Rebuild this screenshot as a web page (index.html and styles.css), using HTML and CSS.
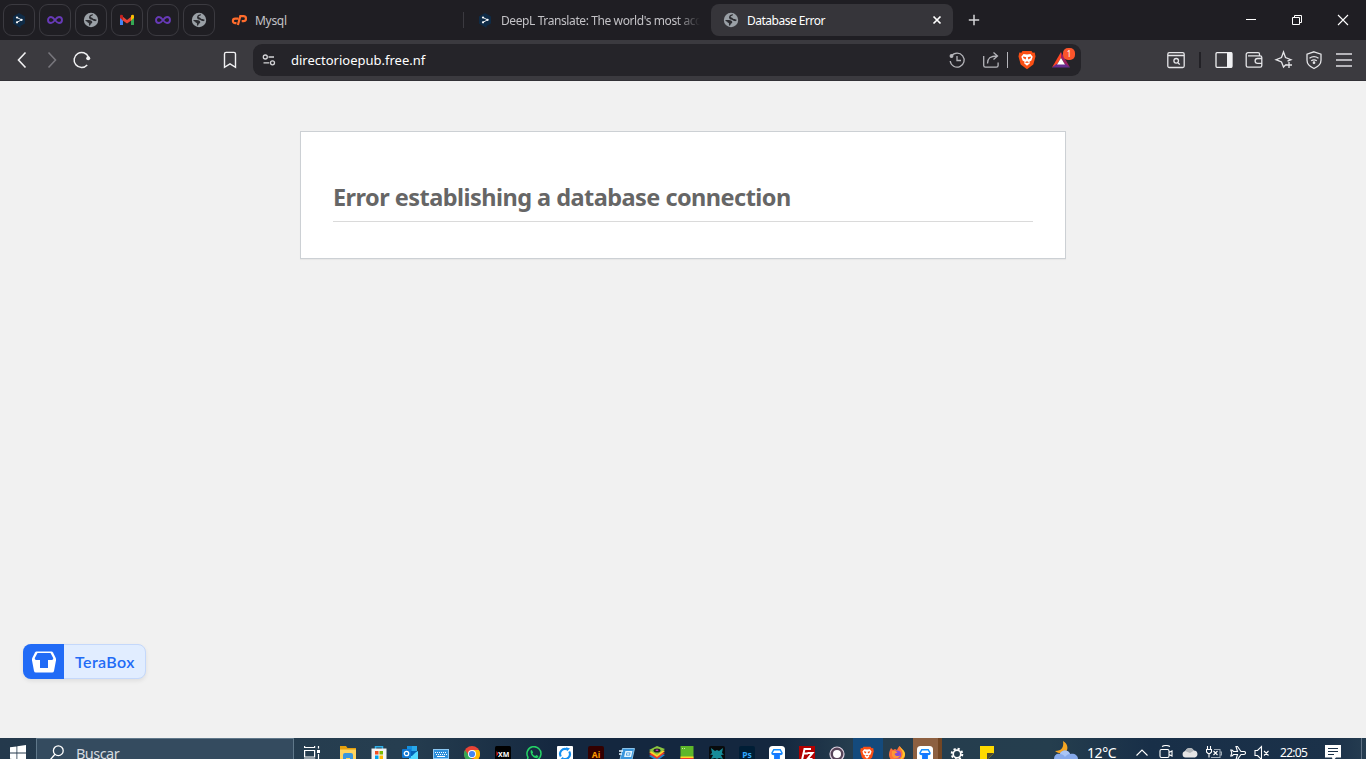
FILE: index.html
```html
<!DOCTYPE html>
<html lang="es">
<head>
  <meta charset="UTF-8">
  <meta name="viewport" content="width=device-width, initial-scale=1.0">
  <title>Database Error</title>
  <link rel="stylesheet" href="styles.css">
</head>
<body>

<!-- Iconos repetidos -->
<svg class="sprite" width="0" height="0">
  <symbol id="deepl" viewBox="0 0 16 16">
    <path fill="#0f2b46" d="M8 1l6 3.400v7L9.500 14v2L2 11.400v-7z"/>
    <path fill="none" stroke="#fff" stroke-width=".9" d="M6 5.500l4.500 2.300L6 10.300"/>
    <circle fill="#fff" cx="6" cy="5.500" r="1.100"/><circle fill="#fff" cx="10.600" cy="7.800" r="1.100"/><circle fill="#fff" cx="6" cy="10.300" r="1.100"/>
  </symbol>
  <symbol id="infinity" viewBox="0 0 16 16">
    <path fill="none" stroke="#673ab7" stroke-width="1.900" d="M8 8C6.500 6 5.500 5 4 5a3 3 0 0 0 0 6c1.500 0 2.500-1 4-3s2.500-3 4-3a3 3 0 0 1 0 6c-1.500 0-2.500-1-4-3z"/>
  </symbol>
  <symbol id="globe" viewBox="0 0 16 16">
    <circle cx="8" cy="8" r="7.200" fill="#9aa0a6"/>
    <path fill="#2b2b30" d="M10 2.300c0 1.200-.6 1.700-1.800 1.700-.8 0-.8 1.500.3 1.600 1.200.2 1 1.400 2.500 1.400.8 0 1.500.5 2.700.8 0 1-1 1.500-2.200 1.300C10 9 9.500 7.800 8 7.600 6.300 7.400 5.500 5.500 6.400 4 7 3 8.500 2.200 10 2.300z"/>
    <path fill="#2b2b30" d="M2.300 8h3.500C8 8 9.500 9 9.300 10.300c-.2 1.300-1.600 1-1.800 2.200-.1.700-.3 1.200-1 1.200-.6-.2-.6-1.400-.5-2 .1-1.200-1.700-.7-1.700-2C3.500 9.500 2.500 9.500 2.300 8z"/>
  </symbol>
  <symbol id="gmail" viewBox="0 0 16 16">
    <path fill="#4285f4" d="M1 5v8h3V7z"/><path fill="#34a853" d="M12 7v6h3V5z"/>
    <path fill="#ea4335" d="M3 4l5 4 5-4v4l-5 3.500L3 8z"/>
    <path fill="#c5221f" d="M1 6V4c0-1.500 2-1.500 3-.5v5z"/><path fill="#fbbc04" d="M15 6V4c0-1.500-2-1.500-3-.5v5z"/>
  </symbol>
  <symbol id="brave" viewBox="0 0 20 20">
    <path fill="#fb4f14" d="M5.500 1h9l1.200 1.800 2-.2.800 4-2.200 8L10 19.200l-6.300-4.600-2.200-8 .8-4 2 .2z"/>
    <path fill="#fff" d="M10 4.500l3.500-.5 2.200 2.800-1.300 3.700-2 1.300.5 1.400-2.900 2.600-2.900-2.600.5-1.400-2-1.300-1.300-3.700L6.500 4z"/>
    <path fill="#fb4f14" d="M6.200 6.500l3 .7-.5 2.300-2.500-1.600zM13.800 6.500l-3 .7.5 2.300 2.500-1.600zM7.800 12.200l2.200-1 2.200 1-2.200.7z"/>
  </symbol>
  <symbol id="tera" viewBox="0 0 16 16">
    <rect width="16" height="16" rx="3.500" fill="#fff"/>
    <path fill="none" stroke="#1590ff" stroke-width="1.500" d="M4.800 3.700h6.400L13 7q0 1.500-2 1.500h-.8v5H5.800v-5H5Q3 8.500 3 7z"/>
    <path fill="#1677ff" d="M3 7h10q0 1.500-2 1.500h-.8v5H5.800v-5H5Q3 8.500 3 7z"/>
  </symbol>
</svg>

<header class="tabs">
  <div class="pinned"><svg><use href="#deepl"/></svg></div>
  <div class="pinned"><svg><use href="#infinity"/></svg></div>
  <div class="pinned"><svg><use href="#globe"/></svg></div>
  <div class="pinned"><svg><use href="#gmail"/></svg></div>
  <div class="pinned"><svg><use href="#infinity"/></svg></div>
  <div class="pinned"><svg><use href="#globe"/></svg></div>
  <div class="tab tab-mysql">
    <svg viewBox="0 0 16 16" fill="none" stroke="#ff6c2c" stroke-width="2.200">
      <path d="M7.300 6.600H4.200a2.300 2.300 0 0 0 0 4.600h1.300M6.900 13L9.300 4.200h3.200a2.200 2.200 0 0 1 0 4.900h-1.800"/>
    </svg>
    <span class="title">Mysql</span>
  </div>
  <div class="tab tab-deepl">
    <svg><use href="#deepl"/></svg>
    <span class="title fade">DeepL Translate: The world's most acc</span>
  </div>
  <div class="tab active">
    <svg><use href="#globe"/></svg>
    <span class="title">Database Error</span>
    <svg class="close" viewBox="0 0 16 16"><path stroke="#fff" stroke-width="1.700" d="M4.500 4.500l7 7M11.500 4.500l-7 7"/></svg>
  </div>
  <svg class="new-tab" viewBox="0 0 16 16"><path stroke="#d5d5d8" stroke-width="1.500" d="M8 2.800v10.400M2.800 8h10.400"/></svg>
  <div class="window-buttons">
    <svg viewBox="0 0 16 16"><path stroke="#fff" d="M3 7.500h10"/></svg>
    <svg viewBox="0 0 16 16" fill="none" stroke="#fff"><path d="M3.500 5.500h7v7h-7zM5.500 5.500v-2h7v7h-2"/></svg>
    <svg viewBox="0 0 16 16"><path stroke="#fff" stroke-width="1.100" d="M3 3l10 10M13 3L3 13"/></svg>
  </div>
</header>

<nav class="toolbar">
  <div class="nav-buttons">
    <svg viewBox="0 0 20 20"><path stroke="#f0f0f2" stroke-width="1.600" d="M13.500 2.500L6.500 10l7 7.500"/></svg>
    <svg viewBox="0 0 20 20"><path stroke="#77767c" stroke-width="1.600" d="M6.500 2.500l7 7.500-7 7.500"/></svg>
    <svg viewBox="0 0 20 20"><path stroke="#f0f0f2" stroke-width="1.500" d="M15.200 15A7.500 7.500 0 1 1 16.500 7"/><circle cx="16.200" cy="8.300" r="2" fill="#f0f0f2"/></svg>
  </div>
  <svg class="bookmark" viewBox="0 0 20 20"><path stroke="#f0f0f2" stroke-width="1.400" d="M4.500 17.300V4c0-1 .6-1.600 1.600-1.600h7.800c1 0 1.600.6 1.600 1.600v13.300L10 13.800z"/></svg>
  <div class="address">
    <svg viewBox="0 0 20 20" stroke="#d5d5d8" stroke-width="1.300"><circle cx="6.300" cy="7" r="2"/><path d="M9.500 7H15M4.500 12.800h5.800"/><circle cx="13.500" cy="12.800" r="2"/></svg>
    <span class="url">directorioepub.free.nf</span>
    <svg class="history" viewBox="0 0 20 20" stroke="#b5b5ba" stroke-width="1.300"><path d="M4.500 6a7 7 0 1 1-1.300 5M10 6v4.500h4"/><circle cx="4.500" cy="6" r="1.300" fill="#b5b5ba"/></svg>
    <svg class="share" viewBox="0 0 20 20" stroke="#b5b5ba" stroke-width="1.300"><path d="M2.700 6v9.500c0 1.200.5 1.700 1.700 1.700h11c1.200 0 1.700-.5 1.700-1.700v-3M6.500 13.500c0-5 2.500-7.500 9.500-7.500M12.500 2.500L16.500 6l-4 3.500"/></svg>
    <span class="divider"></span>
    <svg class="shield"><use href="#brave"/></svg>
    <span class="rewards">
      <svg viewBox="0 0 20 20"><path fill="#ff4724" d="M10 2L1 17.500l4.500-2.500L10 8z"/><path fill="#9e1f63" d="M10 2l9 15.500-4.500-2.500L10 8z"/><path fill="#662d91" d="M1 17.500h18L14.500 14h-9z"/><path fill="#fff" d="M10 8l4 6.500H6z"/></svg>
      <span class="badge">1</span>
    </span>
  </div>
  <div class="actions">
    <svg viewBox="0 0 20 20" stroke="#e5e5e8" stroke-width="1.300"><rect x="1.800" y="2.700" width="16.400" height="14.800" rx="1.500"/><path d="M2 5.500h16M12 13l1.800 1.500"/><circle cx="10.200" cy="10.800" r="2.300"/></svg>
    <span class="divider dark"></span>
    <svg viewBox="0 0 20 20"><rect x="2" y="2.700" width="16" height="14.600" rx="1" stroke="#f0f0f2" stroke-width="1.300"/><path fill="#f0f0f2" d="M13 2.500h5v15h-5z"/></svg>
    <svg viewBox="0 0 20 20" stroke="#e5e5e8" stroke-width="1.300"><path d="M15.500 5.500V4c0-.8-.5-1.300-1.300-1.300H4A1.800 1.800 0 0 0 2.200 4.500v11c0 1 .6 1.600 1.600 1.600h12.400c1 0 1.600-.6 1.600-1.600v-8c0-1-.6-1.600-1.600-1.600H4M18 8.500h-4.500a2.400 2.400 0 0 0 0 4.800H18"/></svg>
    <svg viewBox="0 0 20 20" stroke="#e5e5e8" stroke-width="1.300"><path d="M12 14.500L9.500 17l-2-5L2 9.700l5.500-2.200L9.500 2l2 5.500L17 9.700l-3.500 1.500M15 12v6M12 15h6"/></svg>
    <svg viewBox="0 0 20 20" stroke="#e5e5e8" stroke-width="1.300"><path d="M10 1.800l7 2.400v6c0 3.800-3 6.500-7 8.300-4-1.800-7-4.500-7-8.300v-6zM5.500 8.200c3-2 6-2 9 0M7.200 10.700c2-1.300 3.600-1.300 5.600 0"/><circle cx="10" cy="12.700" r=".7"/></svg>
    <svg viewBox="0 0 20 20" stroke="#b5b4b9" stroke-width="1.800"><path d="M2 4h16M2 10h16M2 16h16"/></svg>
  </div>
</nav>

<main class="page">
  <div class="error-box">
    <h1>Error establishing a database connection</h1>
  </div>
  <div class="terabox">
    <div class="terabox-logo">
      <svg viewBox="0 0 24 22"><path fill="#fff" d="M4.500 .5h15q1 0 1.500 1L24 7.500v2L22 20q-.3 1.500-2 1.500H4Q2.300 21.500 2 20L0 9.500v-2l3-6q.5-1 1.500-1z"/><path fill="#216bf6" d="M5.500 2h13l2.700 5c.3 1.500-.8 2-1.900 2H16v8H8V9H4.700C3.600 9 2.500 8.500 2.800 7z"/></svg>
    </div>
    <span class="terabox-name">TeraBox</span>
  </div>
</main>

<footer class="taskbar">
  <div class="start"><svg viewBox="0 0 16 16" fill="#fff"><path d="M0 2.300L6.500 1.400v6.100H0zM7.300 1.300L16 0v7.500H7.300zM0 8.400h6.500v6.200L0 13.700zM7.300 8.400H16V16l-8.700-1.200z"/></svg></div>
  <div class="search">
    <svg viewBox="0 0 16 16" fill="none" stroke="#fff" stroke-width="1.300"><circle cx="9.300" cy="5.700" r="4.900"/><path d="M6 9.300L1 15"/></svg>
    <span>Buscar</span>
  </div>
  <div class="apps">
    <!-- Vista de tareas -->
    <div class="app task-view"><svg viewBox="0 0 16 16" fill="none" stroke="#fff" stroke-width="1.200"><path d="M.6 0v1.500h10V0M.6 4.500h10v6.500h-10zM.6 16v-3h10v3M14.500 0v2.500M14.500 8v8"/><path fill="#fff" d="M13.600 4.500h1.800v1.800h-1.800z"/></svg></div>
    <!-- Explorador -->
    <div class="app"><svg viewBox="0 0 16 16"><path fill="#e5a00d" d="M0 0h6l1.500 2H16v5H0z"/><path fill="#ffd45e" d="M0 3.500h16V16H0z"/><path fill="#3a96dd" d="M3 16V9q0-2 2-2h6q2 0 2 2v7h-3v-4H6v4z"/></svg></div>
    <!-- Microsoft Store -->
    <div class="app"><svg viewBox="0 0 16 16"><path fill="none" stroke="#30b0e8" stroke-width="1.500" d="M4.500 3V.7h7V3"/><path fill="#f4f4f4" d="M.5 2.500h15V16H.5z"/><path fill="#f25022" d="M4 5h3.500v3.500H4z"/><path fill="#7fba00" d="M8.500 5H12v3.500H8.500z"/><path fill="#00a4ef" d="M4 9.500h3.500V13H4z"/><path fill="#ffb900" d="M8.500 9.500H12V13H8.500z"/></svg></div>
    <!-- Outlook -->
    <div class="app"><svg viewBox="0 0 16 16"><path fill="#1490df" d="M5 0h8v6H5z"/><path fill="#28a8ea" d="M10 0h5v5h-5z"/><path fill="#50d9ff" d="M7 9l9-4v9H7z"/><path fill="#0364b8" d="M5 5h10l-5 5H5z"/><rect y="3" width="9" height="9" rx="1" fill="#0f78d4"/><circle cx="4.500" cy="7.500" r="2.200" fill="none" stroke="#fff" stroke-width="1.300"/></svg></div>
    <!-- Teclado -->
    <div class="app"><svg viewBox="0 0 16 16"><rect x=".5" y="3.500" width="15" height="9" fill="#2d8fdc" stroke="#8dc9f5"/><path stroke="#fff" stroke-dasharray="1 1" d="M2 6.500h12M3 8.500h11"/><path stroke="#fff" d="M4 10.500h8"/></svg></div>
    <!-- Chrome -->
    <div class="app"><svg viewBox="0 0 16 16"><circle cx="8" cy="8" r="8" fill="#ea4335"/><path fill="#34a853" d="M1.100 4L5 10l3 2-1 4A8 8 0 0 1 1.100 4z"/><path fill="#fbbc04" d="M8 4h6.900A8 8 0 0 1 7 16l4.500-6z"/><circle cx="8" cy="8" r="4" fill="#fff"/><circle cx="8" cy="8" r="3.100" fill="#4285f4"/></svg></div>
    <!-- XM -->
    <div class="app"><svg viewBox="0 0 16 16"><rect width="16" height="16" rx="1.500"/><path fill="#e2231a" d="M1.500 5l2 2.700-2 2.700z"/><text class="xm" x="3" y="10.500">XM</text></svg></div>
    <!-- WhatsApp -->
    <div class="app"><svg viewBox="0 0 16 16"><path fill="none" stroke="#25d366" stroke-width="1.500" d="M1 15l1-3.700A7 7 0 1 1 5 14z"/><path fill="#25d366" d="M4.700 4.500l1.200-.4 1.200 2.300-.8 1q1 2 3 2.700l1-1 2 1c0 1.700-1.300 2.300-2.600 2C6.800 11.500 4 8 4.700 4.500z"/></svg></div>
    <!-- Sincronización -->
    <div class="app"><svg viewBox="0 0 16 16"><rect width="16" height="16" rx="1" fill="#fff"/><g fill="none" stroke="#168ff0" stroke-width="2.200"><path d="M3.800 10.500A5 5 0 0 1 10 3.300M12.200 5.500A5 5 0 0 1 6 12.700"/></g><path fill="#168ff0" d="M9 1.300l4 1.200-3 2.700zM7 14.700l-4-1.200 3-2.700z"/></svg></div>
    <!-- Illustrator -->
    <div class="app"><svg viewBox="0 0 16 16"><rect width="16" height="16" rx="2" fill="#330000"/><text class="adobe" fill="#ff9a00" x="8" y="11.500">Ai</text></svg></div>
    <!-- Ventanas -->
    <div class="app"><svg viewBox="0 0 16 16"><path fill="#3a96dc" stroke="#a5dcff" stroke-width=".8" d="M3.500 2.500h12l-2.500 11H1z"/><path fill="none" stroke="#e5f6ff" stroke-width="1.500" d="M7 5.700h5.500l-1 4.500H6zM0 5h4M0 8h3M8 8h2.500"/></svg></div>
    <!-- BlueStacks -->
    <div class="app"><svg viewBox="0 0 16 16"><path fill="#2384cc" d="M0 10l8 5 8-6-8-3z"/><path fill="#e8382d" d="M0 8l8 5 8-6-8-3z"/><path fill="#ffd328" d="M0 6l8 5 8-6-8-3z"/><path fill="#8cc63f" d="M0 4l8-4 8 3-8 6z"/><ellipse cx="8" cy="4.500" rx="3.500" ry="2" fill="#222"/><ellipse cx="8" cy="4.300" rx="1.500" ry=".8" fill="#c3c"/></svg></div>
    <!-- BlueStacks multi -->
    <div class="app"><svg viewBox="0 0 16 16"><rect x="1.500" y="-1" width="13" height="17" rx="1.500" fill="#5eb72a"/><path fill="#2384cc" d="M1.500 14h13v2h-13z"/><path fill="#ffd328" d="M1.500 10.500h13V12h-13z"/><path fill="#e8382d" d="M1.500 12h13v2h-13z"/><path fill="#c9ec9c" d="M3 2h1v1H3zM5 2h1v1H5z"/></svg></div>
    <!-- Perplexity -->
    <div class="app"><svg viewBox="0 0 16 16"><rect width="16" height="16" rx="2" fill="#080b0d"/><path fill="#178c98" d="M2 2l4 3 2-1 2 1 4-3-1 5 2 1.500-3 .5 2 4-4-1-2 1-2-1-4 1 2-4-3-.5L3 7z"/></svg></div>
    <!-- Photoshop -->
    <div class="app"><svg viewBox="0 0 16 16"><rect width="16" height="16" rx="2" fill="#001e36"/><text class="adobe" fill="#31a8ff" x="8" y="11.500">Ps</text></svg></div>
    <div class="app"><svg><use href="#tera"/></svg></div>
    <!-- FileZilla -->
    <div class="app"><svg viewBox="0 0 16 16"><path fill="#b30000" d="M0 0h16v16H0z"/><path fill="none" stroke="#fff" stroke-width="2" d="M3 14L5.500 3H12M4.500 7.500H9M8.500 7h5l-5 6h5"/></svg></div>
    <!-- Grabadora -->
    <div class="app"><svg viewBox="0 0 16 16"><circle cx="8" cy="8" r="7" fill="#574559" stroke="#ddd1df" stroke-width="1.200"/><circle cx="8" cy="8" r="4" fill="#fff"/></svg></div>
    <div class="app app-brave"><svg><use href="#brave"/></svg></div>
    <!-- Firefox -->
    <div class="app"><svg viewBox="0 0 16 16"><path fill="#ff7139" d="M2 2l2 2 2-1 2 1c1-2 1-3 3-4 0 2 5 4 5 9 0 4-3.500 7-8 7s-8-3-8-7.500C0 6 1 4 2 2z"/><path fill="#ffca28" d="M10.500 0c0 3 4 4 3 9-.5 3-2 4-4 4.500 5 0 6.500-3 6.500-5.500 0-4-4-5-5.500-8z"/><circle cx="8" cy="8.500" r="4" fill="#8a4bd5"/><path fill="#ff9736" d="M3 5h3.500l2 1.500-3 1.200c.5 2.300 3 3 5.500 1.800-1 3.500-6.500 4-8 0z"/></svg></div>
    <div class="app app-tera"><svg><use href="#tera"/></svg></div>
    <!-- Configuración -->
    <div class="app"><svg viewBox="0 0 16 16" fill="none" stroke="#fff"><circle cx="8" cy="8" r="5.300" stroke-width="2" stroke-dasharray="2.160 2"/><circle cx="8" cy="8" r="3.800" stroke-width="1.700"/></svg></div>
    <!-- Notas -->
    <div class="app"><svg viewBox="0 0 16 16"><path fill="#ffda00" d="M1 0h14v7l-7 7H1z"/><path fill="#4d4a30" d="M8 14V7h7z"/></svg></div>
  </div>
  <div class="tray">
    <svg class="weather" viewBox="0 0 26 20"><path fill="#f5a623" d="M10 0c4 2 6 7 3 11-2 2-8 2-11-1 7 0 9-4 8-10z"/><path fill="#86a9ea" d="M1 18c0-4 3-6 6-5 1-4 8-5 10 0 4-1 8 1 8 5v2H1z"/><path fill="#a9c5f6" d="M7 13c1-4 8-5 10 0-3 0-4 2-5 3-1-2-3-3-5-3z"/></svg>
    <span class="temp">12°C</span>
    <svg class="chevron" viewBox="0 0 16 16"><path d="M2.500 10.500L8 5l5.500 5.500"/></svg>
    <svg viewBox="0 0 16 16"><path d="M4 1.500q4-2 8 0M3.500 4.500h6q1.500 0 1.500 1.500v5q0 1.500-1.500 1.500h-6Q2 12.500 2 11V6q0-1.500 1.500-1.500zM11 7.500l3-1.500v5l-3-1.500"/></svg>
    <svg viewBox="0 0 16 16"><path fill="#e4e4e4" stroke="none" d="M3.500 12.500a3.300 3.300 0 0 1-.3-6.500A5 5 0 0 1 12 5.500a3.600 3.600 0 0 1 1 7z"/><path fill="#b0b4b8" stroke="none" d="M3 6q4-5.500 9-.5L8 8z"/></svg>
    <svg viewBox="0 0 16 16"><path d="M1.500 1v3M4.500 1v3M.5 4.500h5V7L4 8.500H2L.5 7zM3 8.500v4M7.500 6l4 4M11.500 6l-4 4"/><path stroke="#9aa7b3" d="M5 12.500h9v-8H8M14.500 7h1v3h-1"/></svg>
    <svg viewBox="0 0 16 16"><path d="M6 1.500h1.500l3.500 5h3q1.500 0 1.500 1.500T14 9.500h-3l-3.500 5H6l1.500-5h-4L2 11H.8l1-3-1-3H2l1.500 1.500h4z"/></svg>
    <svg viewBox="0 0 16 16"><path d="M1 5.500h2.500l4-4v13l-4-4H1zM10 6l4.500 4.500M14.500 6L10 10.500"/></svg>
    <span class="clock">22:05</span>
    <svg class="notice" viewBox="0 0 16 16"><path fill="#fff" stroke="none" d="M0 0h16v12.500h-5L8 16l-1-3.500H0z"/><path stroke="#1b3148" d="M3 3.500h10M3 6.500h10M3 9.500h6"/></svg>
    <span class="desktop"></span>
  </div>
</footer>

</body>
</html>
```
FILE: styles.css
```css
* {
  box-sizing: border-box;
}

body {
  display: flex;
  flex-direction: column;
  height: 759px;
  margin: 0;
  overflow: hidden;
  background: #f1f1f1;
  font-family: "Noto Sans", "Open Sans", sans-serif;
}

svg {
  display: block;
  flex: none;
  width: 16px;
  height: 16px;
}

.sprite {
  display: none;
}

/* Pestañas */
.tabs {
  display: flex;
  flex: none;
  height: 40px;
  padding: 4px 0 4px 3px;
  background: #1f1e23;
}

.pinned {
  display: flex;
  align-items: center;
  justify-content: center;
  flex: none;
  width: 32px;
  height: 32px;
  margin-right: 4px;
  border: 1px solid #3b3a40;
  border-radius: 9px;
}

.tab {
  display: flex;
  align-items: center;
  flex: none;
  gap: 8px;
  padding-left: 12px;
  color: #c3c2c6;
  font-size: 12px;
  letter-spacing: -0.3px;
  white-space: nowrap;
}

.tab-mysql {
  width: 244px;
}

.tab-deepl {
  width: 248px;
  padding-left: 14px;
  padding-right: 12px;
  background: linear-gradient(#3b3a40, #3b3a40) 0 8px / 1px 16px no-repeat;
}

.fade {
  letter-spacing: -0.4px;
  -webkit-mask-image: linear-gradient(90deg, #000 88%, transparent);
  mask-image: linear-gradient(90deg, #000 88%, transparent);
}

.active {
  width: 242px;
  border-radius: 8px;
  background: #36353a;
  color: #fff;
  letter-spacing: -0.5px;
}

.close {
  margin-left: auto;
  margin-right: 8px;
}

.new-tab {
  margin: 8px 0 0 13px;
}

.window-buttons {
  display: flex;
  gap: 30px;
  margin: 8px 15px 0 auto;
}

/* Barra de navegación */
.toolbar {
  display: flex;
  align-items: center;
  flex: none;
  height: 41px;
  padding-left: 12px;
  border-bottom: 1px solid #323136;
  background: #3b3a3f;
}

.toolbar svg {
  width: 20px;
  height: 20px;
  fill: none;
}

.nav-buttons {
  display: flex;
  gap: 10px;
}

.bookmark {
  margin: 0 13px 0 128px;
}

.address {
  display: flex;
  align-items: center;
  width: 828px;
  height: 32px;
  padding: 0 10px 0 6px;
  border-radius: 9px;
  background: #252429;
}

.url {
  margin-left: 12px;
  color: #fff;
  font-size: 13px;
}

.history {
  margin-left: auto;
}

.share {
  margin: 0 6px 0 14px;
}

.divider {
  width: 1px;
  height: 16px;
  background: #b5b5ba;
}

.shield {
  margin: 0 14px 0 9px;
}

.rewards {
  position: relative;
}

.badge {
  position: absolute;
  top: -2px;
  left: 12px;
  width: 12px;
  height: 12px;
  border-radius: 5px;
  background: #fb542b;
  color: #fff;
  font-size: 8px;
  line-height: 12px;
  text-align: center;
}

.actions {
  display: flex;
  align-items: center;
  gap: 10px;
  margin-left: 85px;
}

.dark {
  width: 2px;
  margin: 0 3px;
  background: #222126;
}

/* Página */
.page {
  display: flex;
  flex: 1;
  flex-direction: column;
  justify-content: space-between;
  padding: 50px 23px 59px;
}

.error-box {
  width: 766px;
  height: 128px;
  margin: 0 auto;
  padding: 16px 32px;
  border: 1px solid #ccd0d4;
  background: #fff;
  box-shadow: 0 1px 1px rgba(0, 0, 0, 0.04);
}

h1 {
  height: 44px;
  margin: 30px 0 0;
  border-bottom: 1px solid #dadada;
  color: #666;
  font-size: 23.5px;
  line-height: 38px;
  letter-spacing: -0.54px;
  white-space: nowrap;
}

.terabox {
  display: flex;
  width: 123px;
  height: 35px;
  border: 1px solid #c4d8fb;
  border-radius: 8px;
  background: #e1edff;
  box-shadow: 0 2px 4px rgba(0, 0, 0, 0.08);
}

.terabox-logo {
  display: flex;
  align-items: center;
  justify-content: center;
  width: 41px;
  height: 35px;
  margin: -1px 0 0 -1px;
  border-radius: 8px 0 0 8px;
  background: #216bf6;
}

.terabox-logo svg {
  width: 24px;
  height: 22px;
}

.terabox-name {
  margin-left: 11px;
  color: #216bf6;
  font: 600 16px/33px Lato, sans-serif;
  letter-spacing: 0.4px;
}

/* Barra de tareas */
.taskbar {
  display: flex;
  flex: none;
  height: 21px;
  overflow: hidden;
  background: linear-gradient(90deg, #24394c, #263e50 400px, #14273f 560px, #14273f 780px, #253d4e 850px, #253e4e 1050px, #182f48 1150px, #1b3149 1330px, #253c50);
  color: #fff;
}

.start {
  width: 36px;
  padding: 7px 0 0 10px;
}

.search {
  display: flex;
  gap: 11px;
  width: 258px;
  height: 40px;
  padding: 6px 0 0 12px;
  border: 1px solid #60788a;
  background: #344b5f;
  color: #d5dadf;
  font-size: 14.5px;
  line-height: 17px;
  letter-spacing: -0.55px;
}

.apps {
  display: flex;
}

.app {
  width: 30px;
  height: 21px;
  padding: 8px 0 0 6px;
}

.task-view {
  width: 40px;
  padding-left: 10px;
}

.app:nth-child(n+2):nth-child(-n+10) {
  width: 31px;
}

.app-brave {
  background: #144a7c;
}

.app-tera {
  padding-left: 4px;
  background: linear-gradient(90deg, #8d6041 25px, #734624 25px, #734624 29px, transparent 29px);
}

.adobe {
  font: bold 8.5px "Noto Sans", sans-serif;
  text-anchor: middle;
}

.xm {
  fill: #fff;
  font: bold 7px "Noto Sans", sans-serif;
}

.tray {
  display: flex;
  gap: 8px;
  margin-left: auto;
}

.tray svg {
  margin-top: 7px;
  fill: none;
  stroke: #fff;
  stroke-width: 1.1;
}

.tray .weather {
  width: 26px;
  height: 20px;
  margin-top: 3px;
  stroke: none;
}

.temp {
  width: 39px;
  font-size: 14px;
  line-height: 30px;
  letter-spacing: -0.4px;
}

.clock {
  width: 37px;
  margin-left: 2px;
  font-size: 12px;
  line-height: 29px;
  letter-spacing: -0.7px;
}

.desktop {
  width: 5px;
  margin-left: 12px;
  border-left: 1px solid #607285;
}
```
